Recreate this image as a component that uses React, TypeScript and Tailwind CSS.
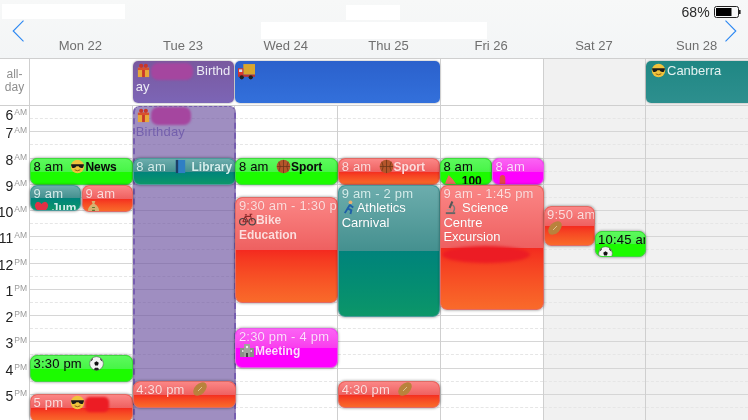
import React from "react";

const Ic = ({ children, w = 15, cls = "" }: { children: React.ReactNode; w?: number; cls?: string }) => (
  <svg viewBox="0 0 16 16" width={w} height={w} className={`inline-block -my-[3px] align-baseline ${cls}`}>{children}</svg>
);
const Gift = () => (
  <Ic>
    <rect x="2" y="5" width="12" height="10" fill="#e8a83a" />
    <rect x="6.5" y="5" width="3" height="10" fill="#c9362b" />
    <rect x="2" y="5" width="12" height="2.5" fill="#d9502f" />
    <circle cx="5.5" cy="3" r="2.2" fill="#c9362b" />
    <circle cx="10.5" cy="3" r="2.2" fill="#c9362b" />
  </Ic>
);
const Truck = () => (
  <Ic w={17} cls="translate-y-[2px]">
    <rect x="5" y="1" width="11" height="10" fill="#d8a62e" />
    <rect x="0" y="5" width="5" height="7" fill="#d9352b" />
    <rect x="1" y="6" width="3" height="2.5" fill="#cfe4f0" />
    <rect x="0" y="11" width="16" height="2" fill="#b33" />
    <circle cx="3.5" cy="13.5" r="2" fill="#222" />
    <circle cx="12" cy="13.5" r="2" fill="#222" />
  </Ic>
);
const Cool = () => (
  <Ic>
    <circle cx="8" cy="8" r="7.2" fill="#f0c23c" />
    <path d="M1.2 5.5h13.6v1.2l-1 2.6q-3.5 1-4.6-1.6h-2.4q-1.1 2.6-4.6 1.6l-1-2.6z" fill="#1a1a1a" />
    <path d="M5 11.5q3 2 6 0" stroke="#8a5a10" strokeWidth="1" fill="none" />
  </Ic>
);
const Book = () => (
  <Ic>
    <rect x="3" y="1" width="10" height="14" fill="#2f7fc4" />
    <rect x="3" y="1" width="2.5" height="14" fill="#1c3f66" />
  </Ic>
);
const Ball = () => (
  <Ic>
    <circle cx="8" cy="8" r="7.3" fill="#b4552a" />
    <path d="M1 8h14M8 1v14M3 3q3 5 0 10M13 3q-3 5 0 10" stroke="#6a3418" strokeWidth=".8" fill="none" />
  </Ic>
);
const Heart = () => (
  <Ic>
    <path d="M8 15Q0 9 1 5q1-3.5 4-3 2 .3 3 2.2 1-1.9 3-2.2 3-.5 4 3 1 4-7 10z" fill="#e03045" />
  </Ic>
);
const Bag = () => (
  <Ic>
    <path d="M6 1h4l-1 3q5 3 5 8 0 3-3 3H5q-3 0-3-3 0-5 5-8z" fill="#d8b070" />
    <path d="M6.5 8h3M6.5 11h3" stroke="#5a7a30" strokeWidth="1.2" />
  </Ic>
);
const Melon = () => (
  <Ic>
    <path d="M1 14L6 2q6 5 9 12z" fill="#e86a5a" />
    <path d="M1 14h14" stroke="#4a9a4a" strokeWidth="1.6" />
  </Ic>
);
const Siren = () => (
  <Ic>
    <path d="M5 12V6q0-4 3-4t3 4v6z" fill="#e04a4a" />
    <rect x="3" y="12" width="10" height="3" fill="#b8a0a0" />
  </Ic>
);
const Bike = () => (
  <Ic w={17}>
    <circle cx="3.6" cy="11" r="3" fill="none" stroke="#444" strokeWidth="1.1" />
    <circle cx="12.4" cy="11" r="3" fill="none" stroke="#444" strokeWidth="1.1" />
    <path d="M3.6 11L6 6h5l1.4 5M6 6l2.5 5h-5M5.5 4.5h2M11 6l-.5-2h2" stroke="#8a2a2a" strokeWidth="1" fill="none" />
  </Ic>
);
const Runner = () => (
  <Ic>
    <circle cx="9" cy="2.5" r="2" fill="#e8b070" />
    <path d="M8.5 5L6 9l4 2-1 4M6 9l-3 5M8 5l4 3" stroke="#1f5fa8" strokeWidth="2" fill="none" />
  </Ic>
);
const Micro = () => (
  <Ic>
    <path d="M9 1l2 1-3 7-2-1z" fill="#555" />
    <path d="M10 5q4 3 1 8" stroke="#777" strokeWidth="1.5" fill="none" />
    <rect x="3" y="13" width="10" height="2" fill="#666" />
    <rect x="4" y="10" width="5" height="1" fill="#999" />
  </Ic>
);
const Football = () => (
  <Ic w={16}>
    <ellipse cx="8" cy="8" rx="8" ry="5.2" transform="rotate(-45 8 8)" fill="#b9823c" />
    <path d="M6 10l4-4" stroke="#e8d0a0" strokeWidth=".8" />
  </Ic>
);
const Soccer = () => (
  <Ic>
    <circle cx="8" cy="8" r="7.3" fill="#f4f4f4" stroke="#555" strokeWidth=".6" />
    <path d="M8 5.5l2.4 1.8-.9 2.8h-3l-.9-2.8z" fill="#111" />
    <path d="M1.5 6L4 4 3.5 1.8zM14.5 6L12 4l.5-2.2zM5 14.5l1.5-2h3l1.5 2-3 1z" fill="#222" />
  </Ic>
);
const School = () => (
  <Ic w={16}>
    <rect x="1" y="6" width="14" height="9" fill="#8b8f88" />
    <rect x="5" y="2" width="6" height="13" fill="#a0a39c" />
    <rect x="7" y="11" width="2" height="4" fill="#444" />
    <rect x="3" y="8" width="1.5" height="2" fill="#ddd" />
    <rect x="11.5" y="8" width="1.5" height="2" fill="#ddd" />
    <circle cx="8" cy="5" r="1.2" fill="#eee" />
  </Ic>
);

type Tone = "red" | "green" | "teal" | "magenta";
const tones: Record<Tone, { base: string; gloss: string; text: string; time: string }> = {
  red: {
    base: "bg-gradient-to-b from-[#f4291f] via-[#f4291f] via-50% to-[#f96a2a] border-[#e06a64]",
    gloss: "bg-gradient-to-b from-[#fb8686] to-[#ee6060]",
    text: "text-white",
    time: "text-[#ffdcdc]",
  },
  green: {
    base: "bg-[#1cfb00] border-[#3ed83e]",
    gloss: "bg-gradient-to-b from-[#5cf95c] to-[#46f546]",
    text: "text-[#0a0a0a]",
    time: "text-[#0a2a0a]",
  },
  teal: {
    base: "bg-gradient-to-b from-[#00837b] via-[#00837b] via-50% to-[#0c9668] border-[#4a9a9a]",
    gloss: "bg-gradient-to-b from-[#6cadad] to-[#44908f]",
    text: "text-white",
    time: "text-[#d4eeec]",
  },
  magenta: {
    base: "bg-[#fe00fe] border-[#e85ae8]",
    gloss: "bg-gradient-to-b from-[#fb62f4] to-[#f93cee]",
    text: "text-white",
    time: "text-[#ffdcff]",
  },
};

type Ev = { left: number; w: number; top: number; h: number; tone: Tone; body: React.ReactNode; extra?: React.ReactNode };

const Time = ({ children }: { children: React.ReactNode }) => <span className="tracking-[0.2px]">{children}</span>;
const B = ({ children }: { children: React.ReactNode }) => <span className="font-bold text-[12px]">{children}</span>;

const days: { name: string; weekend?: boolean; events: Ev[] }[] = [
  {
    name: "Mon 22",
    events: [
      { left: 0, w: 103, top: 53, h: 27, tone: "green", body: <><Time>8 am</Time>{"\u00a0\u00a0"}<Cool /><B>News</B></> },
      { left: 0, w: 51, top: 80, h: 26, tone: "teal", body: <><Time>9 am</Time><br /><Heart /><B>.Jum</B></> },
      { left: 52, w: 51, top: 80, h: 27, tone: "red", body: <><Time>9 am</Time><br /><Bag /></> },
      { left: 0, w: 103, top: 250, h: 27, tone: "green", body: <><Time>3:30 pm</Time>{"\u00a0\u00a0"}<Soccer /></> },
      { left: 0, w: 103, top: 289, h: 28, tone: "red", body: <><Time>5 pm</Time>{"\u00a0\u00a0"}<Cool /><span className="inline-block w-[24px] h-[15px] -my-[3px] align-[-2px] rounded-[5px] bg-[#ec1c24] blur-[1px]" /></> },
    ],
  },
  {
    name: "Tue 23",
    events: [
      { left: 0, w: 103, top: 53, h: 27, tone: "teal", body: <><Time>8 am</Time>{"\u00a0\u00a0"}<Book /><B>{" "}Library</B></> },
      { left: 0, w: 103, top: 276, h: 27, tone: "red", body: <><Time>4:30 pm</Time>{"\u00a0\u00a0"}<Football /></> },
    ],
  },
  {
    name: "Wed 24",
    events: [
      { left: 0, w: 103, top: 53, h: 27, tone: "green", body: <><Time>8 am</Time>{"\u00a0\u00a0"}<Ball /><B>Sport</B></> },
      { left: 0, w: 103, top: 92, h: 106, tone: "red", body: <><span className="whitespace-nowrap"><Time>9:30 am - 1:30 pm</Time></span><br /><Bike /><span className="font-bold text-[12px]">Bike<br />Education</span></> },
      { left: 0, w: 103, top: 223, h: 40, tone: "magenta", body: <><Time>2:30 pm - 4 pm</Time><br /><School /><B>Meeting</B></> },
    ],
  },
  {
    name: "Thu 25",
    events: [
      { left: 0, w: 102, top: 53, h: 27, tone: "red", body: <><Time>8 am</Time>{"\u00a0\u00a0"}<Ball /><B>Sport</B></> },
      { left: 0, w: 102, top: 80, h: 132, tone: "teal", body: <><Time>9 am - 2 pm</Time><br /><Runner /><span className="text-white">Athletics<br />Carnival</span></> },
      { left: 0, w: 102, top: 276, h: 27, tone: "red", body: <><Time>4:30 pm</Time>{"\u00a0\u00a0"}<Football /></> },
    ],
  },
  {
    name: "Fri 26",
    events: [
      { left: -1, w: 52, top: 53, h: 27, tone: "green", body: <><Time>8 am</Time><br /><Melon /><B>{"\u00a0"}100</B></> },
      { left: 51, w: 52, top: 53, h: 27, tone: "magenta", body: <><Time>8 am</Time><br /><Siren /></> },
      {
        left: -1, w: 104, top: 80, h: 125, tone: "red",
        body: <><Time>9 am - 1:45 pm</Time><br /><Micro />{"\u00a0"}<span className="text-white">Science<br />Centre<br />Excursion</span></>,
        extra: <div className="absolute left-[1px] top-[60px] w-[88px] h-[17px] rounded-[50%] bg-[#ec1c24] blur-[1.5px]" />,
      },
    ],
  },
  {
    name: "Sat 27",
    weekend: true,
    events: [
      { left: 0, w: 51, top: 101, h: 40, tone: "red", body: <><span className="whitespace-nowrap"><Time>9:50 am</Time></span><br /><Football /></> },
      { left: 51, w: 51, top: 126, h: 26, tone: "green", body: <><span className="whitespace-nowrap"><Time>10:45 am</Time></span><br /><Soccer /></> },
    ],
  },
  { name: "Sun 28", weekend: true, events: [] },
];

const hours: [string, string][] = [
  ["6", "AM"], ["7", "AM"], ["8", "AM"], ["9", "AM"], ["10", "AM"], ["11", "AM"],
  ["12", "PM"], ["1", "PM"], ["2", "PM"], ["3", "PM"], ["4", "PM"], ["5", "PM"],
];

function EventBox({ e }: { e: Ev }) {
  const t = tones[e.tone];
  return (
    <div
      className={`absolute z-10 overflow-hidden rounded-[7px] border-[0.5px] shadow-[0_0_3px_rgba(0,0,0,0.5)] ${t.base}`}
      style={{ left: e.left, width: e.w, top: e.top, height: e.h }}
    >
      <div className={`absolute inset-x-0 top-0 h-1/2 ${t.gloss}`} />
      {e.extra}
      <div className={`relative pl-[2.5px] pt-[0.5px] text-[13px] leading-[14.5px] [text-shadow:0_0_1px_rgba(0,0,0,0.15)] ${t.time}`}>
        <span className={t.text === "text-white" ? "" : t.text}>{e.body}</span>
      </div>
    </div>
  );
}

function AllDay({ children, cls, span }: { children: React.ReactNode; cls: string; span?: boolean }) {
  return (
    <div className={`h-[42px] mt-[2px] ml-[1px] overflow-hidden rounded-[5px] pl-[3px] pt-[2px] text-[13px] leading-[16px] text-[#ecebf5] shadow-[0_0_2px_rgba(0,0,0,0.45)] ${cls} ${span ? "col-span-2" : ""}`}>
      {children}
    </div>
  );
}

export default function App() {
  return (
    <div className="relative w-[748px] h-[420px] overflow-hidden bg-white font-['Liberation_Sans',Arial,sans-serif] blur-[0.4px]">
      {/* header */}
      <div className="relative h-[59px] border-b border-[#cfcfcf] bg-gradient-to-b from-[#f7f8f8] to-[#f3f5f6]">
        <div className="absolute left-[2px] top-[4px] w-[123px] h-[15px] bg-white" />
        <div className="absolute left-[346px] top-[5px] w-[54px] h-[15px] bg-white" />
        <div className="absolute left-[261px] top-[22px] w-[226px] h-[17px] bg-white" />
        <div className="absolute right-[7px] top-[5px] flex items-center gap-[4px]">
          <span className="text-[14px] leading-[14px] text-[#2a2a2a] tracking-[0.2px]">68%</span>
          <svg width="27" height="12" viewBox="0 0 27 12">
            <rect x="0.5" y="0.5" width="24" height="11" rx="2" fill="none" stroke="#222" />
            <rect x="2" y="2" width="15.5" height="8" fill="#000" />
            <rect x="25" y="4" width="1.6" height="4" fill="#222" />
          </svg>
        </div>
        <svg className="absolute left-[12px] top-[20px]" width="13" height="22" viewBox="0 0 13 22">
          <path d="M11.5 .7L1.2 11l10.3 10.3" fill="none" stroke="#2b87f2" strokeWidth="1.1" />
        </svg>
        <svg className="absolute right-[11px] top-[20px]" width="13" height="22" viewBox="0 0 13 22">
          <path d="M1.5 .7L11.8 11 1.5 21.3" fill="none" stroke="#2b87f2" strokeWidth="1.1" />
        </svg>
        <div className="absolute left-[29px] right-0 top-[38px] grid grid-cols-7 text-center text-[13px] leading-[15px] text-[#6f6f6f]">
          {days.map((d) => (
            <div key={d.name}>{d.name}</div>
          ))}
        </div>
      </div>

      {/* all-day row */}
      <div className="flex h-[47px] border-b border-[#cfcfcf]">
        <div className="w-[29px] shrink-0 pt-[9px] text-center text-[12px] leading-[13px] text-[#8e8e8e]">
          all-<br />day
        </div>
        <div className="relative grid flex-1 grid-cols-7">
          <div className="border-l border-[#cfcfcf]" />
          <AllDay cls="bg-gradient-to-b from-[#79599f] to-[#7c65b6]">
            <span className="break-all">
              <Gift />
              <span className="inline-block w-[42px] h-[17px] -my-[3px] align-[-2px] rounded-[7px] bg-[#a5469f] blur-[1px]" />
              {"\u00a0"}Birthday
            </span>
          </AllDay>
          <AllDay span cls="bg-gradient-to-b from-[#2b61cc] to-[#3370db]">
            <Truck />
          </AllDay>
          <div className="border-l border-[#cfcfcf]" />
          <div className="border-l border-[#cfcfcf] bg-[#f1f1f1]" />
          <div className="border-l border-[#cfcfcf] bg-[#f1f1f1]" />
          <div className="absolute right-[-4px] top-[2px] flex h-[42px] w-[106px] rounded-[5px] bg-gradient-to-b from-[#1f8784] to-[#2d8f8e] pl-[5px] pt-[1px] text-[13px] leading-[18px] text-[#e4f2f1] shadow-[0_0_2px_rgba(0,0,0,0.4)]">
            <div>
              <Cool /><span className="ml-[1px]">Canberra</span>
            </div>
          </div>
        </div>
      </div>

      {/* time grid */}
      <div className="-mt-px flex">
        <div className="w-[29px] shrink-0">
          {hours.map(([h, m], i) => (
            <div key={h + m} className="flex h-[26.25px] justify-end pr-[2px]">
              <div className={`flex items-start ${i === 0 ? "mt-[2px]" : "-mt-[6px]"}`}>
                <span className="text-[14px] leading-[17px] text-[#222]">{h}</span>
                <span className="ml-[1px] text-[8.5px] leading-[10px] text-[#9a9a9a]">{m}</span>
              </div>
            </div>
          ))}
        </div>
        <div className="flex flex-1">
          {days.map((d, di) => (
            <div key={d.name} className={`relative flex-1 border-l border-[#cfcfcf] ${d.weekend ? "bg-[#f1f1f1]" : "bg-white"}`}>
              {hours.map(([h, m], i) => (
                <div key={h + m} className={`h-[26.25px] border-t ${i > 0 ? "border-[#d6d6d6]" : "border-[#cfcfcf]"}`}>
                  <div className="h-[13px] border-b border-dashed border-[#e6e6e6]" />
                </div>
              ))}
              {di === 1 && (
                <div className="absolute left-0 top-[1px] z-[5] h-[330px] w-[103px] rounded-[6px] border-x-2 border-t border-dashed border-[#775eb0] bg-[#6b519f]/65 pl-[1px] pt-[1px] text-[13px] leading-[16px] text-[#7460ad]">
                  <Gift />
                  <span className="inline-block w-[40px] h-[18px] -my-[3px] align-[-2px] rounded-[7px] bg-[#a5469f] blur-[1px]" />
                  <br />
                  <span className="tracking-[0.2px]">Birthday</span>
                </div>
              )}
              {d.events.map((e, i) => (
                <EventBox key={i} e={e} />
              ))}
            </div>
          ))}
        </div>
      </div>
    </div>
  );
}
